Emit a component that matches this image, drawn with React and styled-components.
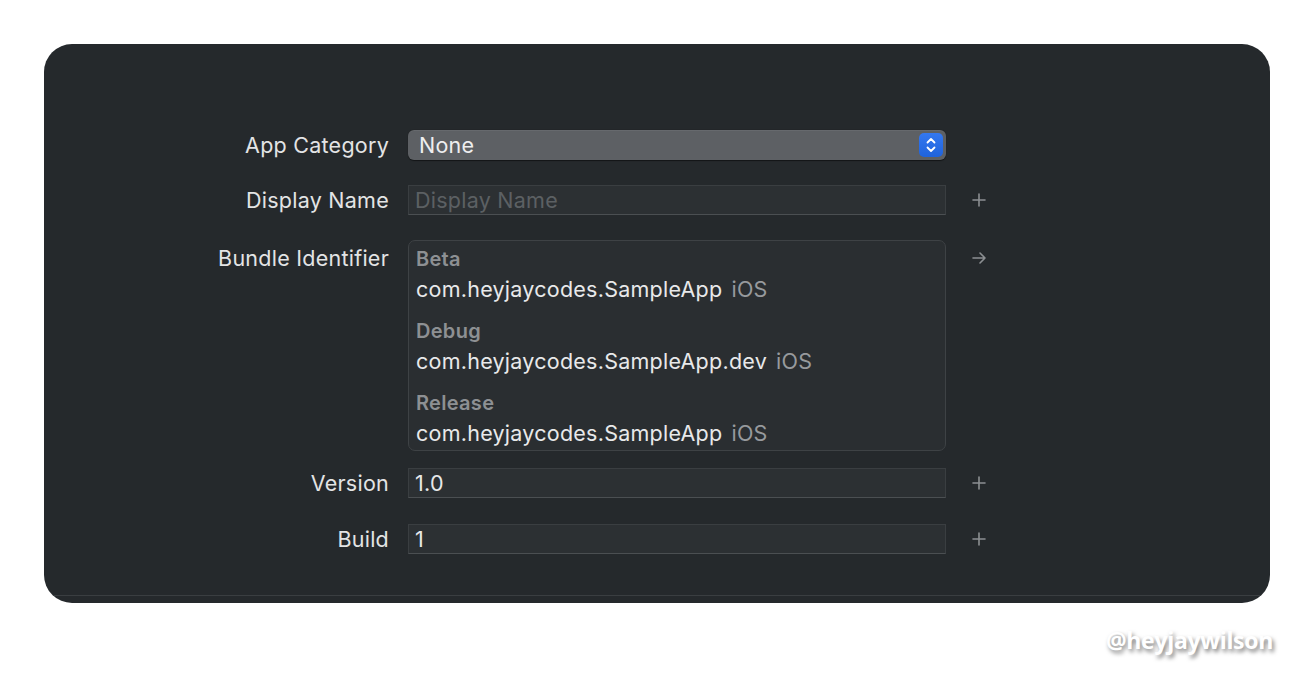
import React from "react";
import styled, { createGlobalStyle } from "styled-components";

const Global = createGlobalStyle`
  html, body { margin: 0; padding: 0; background: #ffffff; }
  body { font-family: Inter, "Noto Sans", "Liberation Sans", sans-serif; -webkit-font-smoothing: antialiased; }
`;

const Page = styled.div`
  width: 1314px;
  height: 698px;
  box-sizing: border-box;
  padding: 44px 44px 0 44px;
  display: flex;
  flex-direction: column;
`;

const Card = styled.div`
  width: 1226px;
  height: 559px;
  box-sizing: border-box;
  background: #25292c;
  border-radius: 28px;
  padding-top: 86px;
  display: flex;
  flex-direction: column;
  overflow: hidden;
`;

const Form = styled.div`
  display: flex;
  flex-direction: column;
  flex: 1;
`;

const Row = styled.div`
  display: grid;
  grid-template-columns: 345px 19px 538px 66px;
  margin-top: ${(p) => p.$mt || 0}px;
  align-items: ${(p) => (p.$top ? "start" : "center")};
`;

const Label = styled.div`
  grid-column: 1;
  text-align: right;
  color: #e3e4e5;
  font-size: 21.5px;
  letter-spacing: 0.25px;
  line-height: 30px;
  padding-top: ${(p) => p.$pt || 0}px;
  white-space: nowrap;
`;

const Popup = styled.div`
  grid-column: 3;
  height: 30px;
  box-sizing: border-box;
  border-radius: 6px;
  background: #5d6064;
  box-shadow: 0 0.5px 1px rgba(0, 0, 0, 0.5), inset 0 1px 0 rgba(255, 255, 255, 0.06);
  display: flex;
  align-items: center;
  justify-content: space-between;
  padding: 0 3px 0 11px;
  color: #eeeeef;
  font-size: 21.5px;
  letter-spacing: 0.25px;
`;

const Stepper = styled.div`
  width: 24px;
  height: 24px;
  border-radius: 5px;
  background: linear-gradient(#3478f0, #1f63dc);
  display: flex;
  align-items: center;
  justify-content: center;
`;

const Field = styled.div`
  grid-column: 3;
  height: 30px;
  box-sizing: border-box;
  background: #2c3033;
  border: 1px solid #3a3e41;
  border-bottom-color: #4b4f52;
  display: flex;
  align-items: center;
  padding-left: 6px;
  font-size: 21.5px;
  letter-spacing: 0.25px;
  color: ${(p) => (p.$placeholder ? "#5c6063" : "#e7e8e9")};
`;

const Accessory = styled.div`
  grid-column: 4;
  display: flex;
  justify-content: center;
  align-items: center;
  height: ${(p) => (p.$top ? "36px" : "30px")};
`;

const Box = styled.div`
  grid-column: 3;
  height: 211px;
  box-sizing: border-box;
  border: 1px solid #3e4245;
  border-radius: 7px;
  background: #2a2e31;
  padding: 4px 0 0 7px;
  display: flex;
  flex-direction: column;
`;

const Group = styled.div`
  display: flex;
  flex-direction: column;
  height: 72px;
  flex-shrink: 0;
`;

const GroupTitle = styled.div`
  font-size: 20px;
  font-weight: 600;
  letter-spacing: 0.3px;
  color: #8d9093;
  line-height: 28px;
`;

const GroupValue = styled.div`
  font-size: 21.5px;
  letter-spacing: 0.25px;
  color: #e8e9ea;
  line-height: 32px;
  white-space: nowrap;
`;

const Platform = styled.span`
  color: #979a9d;
  margin-left: 9px;
`;

const Separator = styled.div`
  height: 1px;
  background: #3a3e41;
  margin: 0 4px 7px;
`;

const Footer = styled.div`
  display: flex;
  justify-content: flex-end;
  padding-top: 21px;
  margin-right: -3px;
`;

const Watermark = styled.div`
  font-family: "Open Sans", "Noto Sans", sans-serif;
  font-weight: 700;
  font-size: 23px;
  color: #ffffff;
  letter-spacing: -0.3px;
  text-shadow: 2px 3px 4px rgba(0, 0, 0, 0.5);
`;

const Plus = () => (
  <svg width="14" height="14" viewBox="0 0 14 14">
    <path d="M7 1v12M1 7h12" stroke="#8c8f92" strokeWidth="1.6" strokeLinecap="round" />
  </svg>
);

const Arrow = () => (
  <svg width="15" height="14" viewBox="0 0 15 14">
    <path d="M1 7h12M8 2l5 5-5 5" stroke="#8c8f92" strokeWidth="1.6" fill="none" strokeLinecap="round" strokeLinejoin="round" />
  </svg>
);

const Chevrons = () => (
  <svg width="12" height="18" viewBox="0 0 12 18">
    <path d="M2.5 6.5L6 3l3.5 3.5M2.5 11.5L6 15l3.5-3.5" stroke="#ffffff" strokeWidth="1.8" fill="none" strokeLinecap="round" strokeLinejoin="round" />
  </svg>
);

const bundles = [
  { title: "Beta", id: "com.heyjaycodes.SampleApp" },
  { title: "Debug", id: "com.heyjaycodes.SampleApp.dev" },
  { title: "Release", id: "com.heyjaycodes.SampleApp" },
];

export default function App() {
  return (
    <>
      <Global />
      <Page>
        <Card>
          <Form>
            <Row>
              <Label>App Category</Label>
              <Popup>
                <span>None</span>
                <Stepper>
                  <Chevrons />
                </Stepper>
              </Popup>
            </Row>
            <Row $mt={25}>
              <Label>Display Name</Label>
              <Field $placeholder>Display Name</Field>
              <Accessory>
                <Plus />
              </Accessory>
            </Row>
            <Row $mt={25} $top>
              <Label $pt={3}>Bundle Identifier</Label>
              <Box>
                {bundles.map((b) => (
                  <Group key={b.title}>
                    <GroupTitle>{b.title}</GroupTitle>
                    <GroupValue>
                      {b.id}
                      <Platform>iOS</Platform>
                    </GroupValue>
                  </Group>
                ))}
              </Box>
              <Accessory $top>
                <Arrow />
              </Accessory>
            </Row>
            <Row $mt={17}>
              <Label>Version</Label>
              <Field>1.0</Field>
              <Accessory>
                <Plus />
              </Accessory>
            </Row>
            <Row $mt={26}>
              <Label>Build</Label>
              <Field>1</Field>
              <Accessory>
                <Plus />
              </Accessory>
            </Row>
          </Form>
          <Separator />
        </Card>
        <Footer>
          <Watermark>@heyjaywilson</Watermark>
        </Footer>
      </Page>
    </>
  );
}
